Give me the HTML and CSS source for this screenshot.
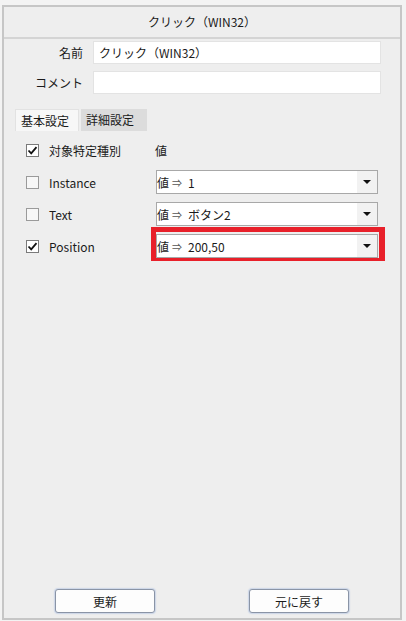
FILE: index.html
```html
<!DOCTYPE html>
<html lang="ja">
<head>
  <meta charset="UTF-8" />
  <title>クリック（WIN32）</title>
  <link rel="stylesheet" href="styles.css">
</head>
<body>
  <div class="panel">
    <div class="panel-title">クリック（WIN32）</div>

    <div class="fields">
      <div class="field">
        <label class="field-label">名前</label>
        <div class="text-box">クリック（WIN32）</div>
      </div>
      <div class="field">
        <label class="field-label">コメント</label>
        <div class="text-box"></div>
      </div>
    </div>

    <div class="tabs">
      <div class="tab active">基本設定</div>
      <div class="tab">詳細設定</div>
    </div>

    <div class="rows">
      <div class="row">
        <span class="check checked">
          <svg width="11" height="11" viewBox="0 0 11 11"><path d="M1.5 5.5 L4.2 8.3 L9.5 2.2" fill="none" stroke="#111" stroke-width="1.8"/></svg>
        </span>
        <span class="row-label">対象特定種別</span>
        <span class="value-head">値</span>
      </div>
      <div class="row">
        <span class="check"></span>
        <span class="row-label">Instance</span>
        <div class="combo">
          <span class="combo-prefix">値<span class="arrow-mark">⇒</span></span>
          <span class="combo-value">1</span>
          <span class="combo-arrow"></span>
        </div>
      </div>
      <div class="row">
        <span class="check"></span>
        <span class="row-label">Text</span>
        <div class="combo">
          <span class="combo-prefix">値<span class="arrow-mark">⇒</span></span>
          <span class="combo-value">ボタン2</span>
          <span class="combo-arrow"></span>
        </div>
      </div>
      <div class="row">
        <span class="check checked">
          <svg width="11" height="11" viewBox="0 0 11 11"><path d="M1.5 5.5 L4.2 8.3 L9.5 2.2" fill="none" stroke="#111" stroke-width="1.8"/></svg>
        </span>
        <span class="row-label">Position</span>
        <div class="combo highlighted">
          <span class="combo-prefix">値<span class="arrow-mark">⇒</span></span>
          <span class="combo-value">200,50</span>
          <span class="combo-arrow"></span>
        </div>
      </div>
    </div>

    <div class="actions">
      <button class="btn">更新</button>
      <button class="btn">元に戻す</button>
    </div>
  </div>
</body>
</html>
```

FILE: styles.css
```css
body {
  margin: 0;
  background: #f3f3f3;
  font-family: "Noto Sans CJK JP", "Noto Sans", sans-serif;
  font-size: 12px;
  color: #1a1a1a;
}
.panel {
  box-sizing: border-box;
  width: 400px;
  height: 615px;
  margin: 5px 0 0 2px;
  border: 2px solid #c6c6c6;
  background: #eeeeee;
  display: flex;
  flex-direction: column;
}
.panel-title {
  height: 30px;
  line-height: 30px;
  text-align: center;
  border-bottom: 2px solid #d4d4d4;
}

/* name / comment */
.fields {
  display: flex;
  flex-direction: column;
  gap: 7px;
  padding: 2px 19px 0 0;
}
.field {
  display: flex;
  align-items: center;
  gap: 10px;
}
.field-label {
  width: 79px;
  text-align: right;
}
.text-box {
  flex: 1;
  box-sizing: border-box;
  height: 23px;
  line-height: 21px;
  padding: 0 5px;
  background: #fff;
  border: 1px solid #e3e3e3;
}

/* tabs */
.tabs {
  display: flex;
  gap: 2px;
  margin: 15px 0 0 11px;
}
.tab {
  box-sizing: border-box;
  height: 22px;
  line-height: 21px;
  padding: 0 5px;
}
.tab.active {
  width: 64px;
  background: #f7f7f7;
  border: 1px solid #e2e2e2;
  border-bottom: none;
}
.tab:not(.active) {
  width: 66px;
  background: #dcdcdc;
}

/* settings rows */
.rows {
  margin-top: 3px;
}
.row {
  display: flex;
  align-items: center;
  height: 32px;
  padding-left: 22px;
}
.check {
  box-sizing: border-box;
  width: 13px;
  height: 13px;
  border: 1px solid #9a9a9a;
  background: #f7f7f7;
  display: flex;
  align-items: center;
  justify-content: center;
}
.check.checked {
  background: #fff;
  border-color: #7a7a7a;
}
.row-label {
  width: 106px;
  margin-left: 10px;
}
.combo {
  position: relative;
  box-sizing: border-box;
  width: 222px;
  height: 24px;
  margin-left: 1px;
  display: flex;
  align-items: center;
  background: #fff;
  border: 1px solid #a8a8a8;
}
.combo-prefix {
  display: flex;
  align-items: center;
}
.arrow-mark {
  font-size: 10px;
  color: #555;
  margin-left: 3px;
}
.combo-value {
  flex: 1;
  margin-left: 6px;
}
.combo-arrow {
  width: 20px;
  height: 100%;
  background: #f2f2f2;
  display: flex;
  align-items: center;
  justify-content: center;
}
.combo-arrow::after {
  content: "";
  border-left: 4px solid transparent;
  border-right: 4px solid transparent;
  border-top: 4px solid #111;
}
.combo.highlighted::before {
  content: "";
  position: absolute;
  top: -8px;
  left: -6px;
  right: -8px;
  bottom: -4px;
  border-style: solid;
  border-color: #e8202a;
  border-width: 5px 6px 3px 5px;
  pointer-events: none;
}

/* buttons */
.actions {
  margin-top: auto;
  display: flex;
  justify-content: space-between;
  padding: 0 51px 5px 51px;
}
.btn {
  width: 100px;
  height: 24px;
  font-family: inherit;
  font-size: 12px;
  color: #1a1a1a;
  background: #fdfdfd;
  border: 1px solid #8a94a6;
  border-radius: 3px;
  box-shadow: 0 0 1px 1px rgba(140, 170, 220, 0.35);
}
```
